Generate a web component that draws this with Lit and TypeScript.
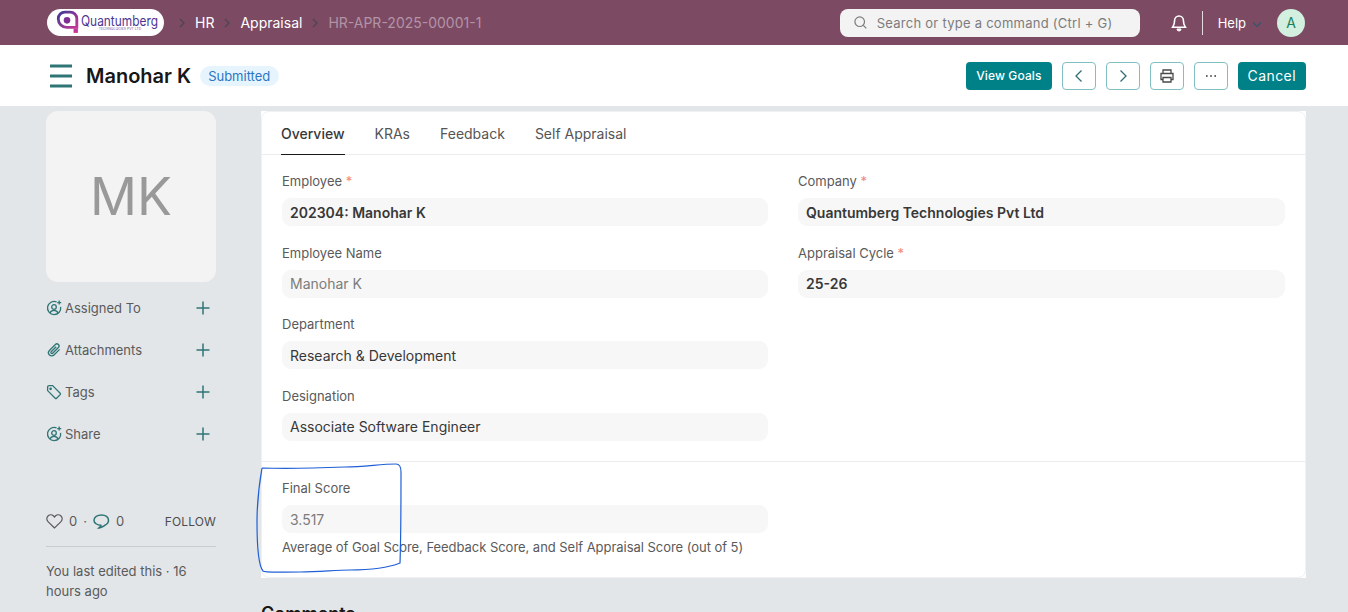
import { LitElement, html, css, svg } from "lit";
import { customElement } from "lit/decorators.js";

interface Field {
  label: string;
  value: string;
  required?: boolean;
  bold?: boolean;
  muted?: boolean;
}

const LEFT_FIELDS: Field[] = [
  { label: "Employee", value: "202304: Manohar K", required: true, bold: true },
  { label: "Employee Name", value: "Manohar K", muted: true },
  { label: "Department", value: "Research & Development" },
  { label: "Designation", value: "Associate Software Engineer" },
];

const RIGHT_FIELDS: Field[] = [
  { label: "Company", value: "Quantumberg Technologies Pvt Ltd", required: true, bold: true },
  { label: "Appraisal Cycle", value: "25-26", required: true, bold: true },
];

const TABS = ["Overview", "KRAs", "Feedback", "Self Appraisal"];

const userIcon = svg`<path d="M10.6 1.9A6.600 6.600 0 1 0 14.600 6.800"/><circle cx="8" cy="7" r="2.3"/><path d="M3.800 13.200c.8-1.900 2.300-2.900 4.200-2.900s3.400 1 4.200 2.900"/><path d="M13.200.6v4M11.200 2.600h4"/>`;
const clipIcon = svg`<path d="M13.600 7.400 8 13a3.200 3.200 0 0 1-4.600-4.500l6-6a2.100 2.100 0 0 1 3 3L6.700 11.200a1 1 0 0 1-1.500-1.400l5-5"/>`;
const tagIcon = svg`<path d="M1.600 3.200v3.400l7.600 7.600a1 1 0 0 0 1.400 0l3.600-3.600a1 1 0 0 0 0-1.400L6.600 1.600H3.200a1.600 1.600 0 0 0-1.600 1.600Z"/><circle cx="4.600" cy="4.800" r=".7"/>`;

const ATTACHMENTS = [
  { label: "Assigned To", icon: userIcon },
  { label: "Attachments", icon: clipIcon },
  { label: "Tags", icon: tagIcon },
  { label: "Share", icon: userIcon },
];

@customElement("app-root")
export class AppRoot extends LitElement {
  static styles = css`
    :host {
      display: block;
      height: 612px;
      overflow: hidden;
      position: relative;
      background: #e2e6e9;
      color: #383838;
      font-family: Inter, "Noto Sans", sans-serif;
      font-size: 13px;
    }

    * {
      box-sizing: border-box;
    }

    svg {
      display: block;
      flex: none;
      fill: none;
    }

    /* top bar */
    .navbar {
      height: 45px;
      background: #7d4a64;
      padding: 0 43px 0 47px;
      display: flex;
      align-items: center;
    }

    .logo {
      width: 117px;
      height: 27px;
      margin-top: -1px;
      border-radius: 14px;
      background: #fff;
      display: flex;
      align-items: center;
      padding-left: 8px;
      gap: 2px;
    }

    .logo__text {
      display: flex;
      flex-direction: column;
      align-items: center;
      color: #4b3592;
    }

    .logo__name {
      font-size: 14px;
      line-height: 13px;
      transform: scaleX(0.85);
      transform-origin: left;
      width: 78px;
      white-space: nowrap;
    }

    .logo__sub {
      font-size: 3.5px;
      line-height: 4px;
      white-space: nowrap;
      color: #7a5aa6;
    }

    .crumbs {
      display: flex;
      align-items: center;
      margin-left: 15px;
      font-size: 14px;
      color: #fff;
      white-space: nowrap;
    }

    .crumbs svg {
      stroke: #4c4550;
      stroke-width: 1.2;
    }

    .crumbs span {
      margin: 0 10px;
    }

    .crumbs .current {
      color: #b194a6;
      margin-right: 0;
    }

    .nav-right {
      margin-left: auto;
      display: flex;
      align-items: center;
    }

    .search {
      width: 300px;
      height: 28px;
      margin-right: 31px;
      border-radius: 8px;
      background: #f3f3f3;
      color: #7c7c7c;
      font-size: 13px;
      letter-spacing: 0.02em;
      display: flex;
      align-items: center;
      gap: 10px;
      padding-left: 14px;
    }

    .search svg {
      stroke: #7c7c7c;
      stroke-width: 1.2;
    }

    .bell {
      fill: #f4f0f2;
      stroke: #fff;
    }

    .divider {
      width: 1px;
      height: 24px;
      background: #e6dae0;
      margin: 0 15px;
    }

    .help {
      color: #fff;
      display: flex;
      align-items: center;
      gap: 5px;
    }

    .help svg {
      stroke: #34566a;
      stroke-width: 1.2;
      margin-top: 3px;
    }

    .avatar {
      width: 28px;
      height: 28px;
      margin-left: 14px;
      border-radius: 50%;
      background: #d2efdf;
      color: #1b7f5a;
      font-size: 14px;
      display: grid;
      place-items: center;
    }

    /* page head */
    .head {
      height: 61px;
      background: #fff;
      padding: 0 42px 0 50px;
      display: flex;
      align-items: center;
    }

    .menu {
      stroke: #2f7575;
      stroke-width: 3;
    }

    .title {
      margin-left: 13px;
      font-size: 20px;
      font-weight: 600;
      color: #171717;
    }

    .badge {
      margin-left: 9px;
      height: 20px;
      padding: 0 9px 0 8px;
      border-radius: 10px;
      background: #e6f4fd;
      color: #2a76c4;
      font-size: 13px;
      display: flex;
      align-items: center;
    }

    .actions {
      margin-left: auto;
      display: flex;
      align-items: center;
      gap: 10px;
    }

    .btn {
      height: 28px;
      border-radius: 4px;
      display: grid;
      place-items: center;
    }

    .btn--primary {
      background: #008087;
      color: #fff;
      padding: 0 10px;
      font-size: 12px;
      font-weight: 500;
      letter-spacing: 0.01em;
    }

    .btn--wide {
      font-size: 14px;
      font-weight: 400;
      letter-spacing: 0.03em;
    }

    .btn--icon {
      width: 34px;
      background: #fff;
      border: 1px solid #80bfc3;
      stroke: #2f6f75;
      stroke-width: 1.3;
    }

    .btn--print {
      stroke: #4a4a4a;
    }

    /* body */
    .layout {
      display: grid;
      grid-template-columns: 170px 1045px;
      column-gap: 45px;
      padding: 5px 0 0 46px;
    }

    .profile {
      width: 170px;
      height: 171px;
      border-radius: 12px;
      background: #f3f3f3;
      color: #999;
      font-size: 52px;
      display: grid;
      place-items: center;
    }

    .links {
      margin-top: 15px;
      display: grid;
      row-gap: 21px;
    }

    .link {
      height: 21px;
      display: flex;
      align-items: center;
      color: #5a5a5a;
    }

    .link__icon {
      stroke: #2f7575;
      stroke-width: 1.3;
      margin-right: 3px;
    }

    .link__plus {
      margin-left: auto;
      margin-right: 6px;
      stroke: #2f7575;
      stroke-width: 1.5;
    }

    .stats {
      margin-top: 69px;
      display: flex;
      align-items: center;
      color: #5a5a5a;
    }

    .stats .heart {
      stroke: #5a5a5a;
      stroke-width: 1.2;
      margin-right: 6px;
    }

    .stats .comment {
      stroke: #2f7575;
      stroke-width: 1.5;
      margin: 0 6px;
    }

    .dot {
      margin-left: 6px;
    }

    .follow {
      margin-left: auto;
      font-size: 12px;
      color: #4c4c4c;
      letter-spacing: 0.01em;
    }

    .edited {
      margin-top: 17px;
      padding-top: 14px;
      border-top: 1px solid #c9cdd1;
      line-height: 20px;
      color: #5a5a5a;
    }

    /* form card */
    .card {
      position: relative;
      background: #fff;
      height: 467px;
    }

    .card::before {
      content: "";
      position: absolute;
      inset: 0;
      border: 1px solid #f0f1f2;
      border-radius: 8px;
      pointer-events: none;
    }

    .tabs {
      height: 44px;
      padding: 0 20px;
      display: flex;
      gap: 30px;
      border-bottom: 1px solid #ebeced;
    }

    .tab {
      height: 44px;
      padding-top: 14px;
      font-size: 14px;
      color: #555;
    }

    .tab--active {
      color: #383838;
      font-weight: 500;
      border-bottom: 1px solid #171717;
    }

    .section {
      padding: 18px 21px 0;
      height: 307px;
      display: grid;
      grid-template-columns: 486px 487px;
      column-gap: 30px;
      align-content: start;
      border-bottom: 1px solid #ebeced;
    }

    .column {
      display: grid;
      row-gap: 18.5px;
      align-content: start;
    }

    .field__label {
      height: 25px;
      line-height: 16px;
      color: #5a5a5a;
    }

    .req {
      color: #f0887c;
    }

    .field__control {
      height: 28px;
      padding: 0 8px;
      border-radius: 9px;
      background: #f7f7f7;
      font-size: 14px;
      color: #383838;
      display: flex;
      align-items: center;
    }

    .is-bold {
      font-weight: 600;
    }

    .is-muted {
      color: #7c7c7c;
    }

    .section--score {
      height: auto;
      border-bottom: 0;
    }

    .hint {
      grid-column: 1 / -1;
      margin-top: 6px;
      font-size: 13px;
      line-height: 16px;
      color: #5a5a5a;
      letter-spacing: -0.04px;
    }

    .comments {
      margin-top: 25px;
      font-size: 18px;
      font-weight: 600;
      color: #171717;
    }

    /* hand-drawn markup on top of the screenshot */
    .scribble {
      position: absolute;
      left: 250px;
      top: 455px;
      stroke: #1f5fd6;
      stroke-width: 1.2;
      pointer-events: none;
    }
  `;

  private crumbChevron() {
    return html`<svg width="6" height="10" viewBox="0 0 6 10"><path d="m1 1 4 4-4 4"></path></svg>`;
  }

  private chevron(right = true) {
    return html`<svg width="16" height="16" viewBox="0 0 16 16">
      <path d=${right ? "m5.500 2.500 5.500 5.500-5.500 5.500" : "M10.500 2.500 5 8l5.500 5.500"}></path>
    </svg>`;
  }

  private renderField(field: Field) {
    const classes = `field__control ${field.bold ? "is-bold" : ""} ${field.muted ? "is-muted" : ""}`;
    return html`<div>
      <div class="field__label">
        ${field.label}${field.required ? html` <span class="req">*</span>` : ""}
      </div>
      <div class=${classes}>${field.value}</div>
    </div>`;
  }

  private renderLogo() {
    return html`<div class="logo">
      <svg width="24" height="24" viewBox="0 0 22 22">
        <defs>
          <linearGradient id="logo-grad" x1="0" y1="0" x2="1" y2="1">
            <stop offset="0" stop-color="#3f3a96"></stop>
            <stop offset="1" stop-color="#c8359a"></stop>
          </linearGradient>
        </defs>
        <path
          d="M9 2h5a6 6 0 0 1 6 6v8h-9a8 8 0 0 1-8-8 6 6 0 0 1 6-6Z"
          stroke="url(#logo-grad)"
          stroke-width="2.6"
        ></path>
        <circle cx="11" cy="9.500" r="3" fill="#7f2f93"></circle>
        <rect x="17" y="17" width="4" height="4" fill="#c8359a"></rect>
      </svg>
      <div class="logo__text">
        <span class="logo__name">Quantumberg</span>
        <span class="logo__sub">TECHNOLOGIES PVT LTD</span>
      </div>
    </div>`;
  }

  render() {
    return html`
      <header class="navbar">
        ${this.renderLogo()}
        <nav class="crumbs">
          ${this.crumbChevron()}<span>HR</span>${this.crumbChevron()}<span>Appraisal</span>${this.crumbChevron()}
          <span class="current">HR-APR-2025-00001-1</span>
        </nav>
        <div class="nav-right">
          <div class="search">
            <svg width="13" height="13" viewBox="0 0 13 13">
              <circle cx="5.700" cy="5.700" r="4.800"></circle>
              <path d="m9.300 9.300 3 3"></path>
            </svg>
            Search or type a command (Ctrl + G)
          </div>
          <svg class="bell" width="16" height="18" viewBox="0 0 16 18">
            <path
              d="M8 2a4.400 4.400 0 0 0-4.400 4.400c0 3.800-1.300 5.600-2 6.800h12.800c-.7-1.200-2-3-2-6.800A4.400 4.400 0 0 0 8 2Z"
              fill="#7d4a64"
              stroke-width="1.600"
            ></path>
            <path d="M6 15h4a2 2 0 0 1-4 0Z"></path>
          </svg>
          <div class="divider"></div>
          <div class="help">
            Help
            <svg width="12" height="12" viewBox="0 0 12 12"><path d="m2 4.500 4 4 4-4"></path></svg>
          </div>
          <div class="avatar">A</div>
        </div>
      </header>

      <section class="head">
        <svg class="menu" width="23" height="24" viewBox="0 0 23 24">
          <path d="M0 2h22M0 12h22M0 22h22"></path>
        </svg>
        <div class="title">Manohar K</div>
        <div class="badge">Submitted</div>
        <div class="actions">
          <div class="btn btn--primary">View Goals</div>
          <div class="btn btn--icon">${this.chevron(false)}</div>
          <div class="btn btn--icon">${this.chevron()}</div>
          <div class="btn btn--icon btn--print">
            <svg width="16" height="16" viewBox="0 0 16 16">
              <path d="M4 5V2h8v3M4 11.500H2V5.500h12v6h-2"></path>
              <path d="M4 9.500h8V14H4Z"></path>
            </svg>
          </div>
          <div class="btn btn--icon">
            <svg width="16" height="16" viewBox="0 0 16 16">
              <path d="M3 8h1.600M7.200 8h1.600M11.400 8h1.600" stroke="#333" stroke-width="1.600"></path>
            </svg>
          </div>
          <div class="btn btn--primary btn--wide">Cancel</div>
        </div>
      </section>

      <main class="layout">
        <aside>
          <div class="profile">MK</div>
          <div class="links">
            ${ATTACHMENTS.map(
              (item) => html`<div class="link">
                <svg class="link__icon" width="16" height="16" viewBox="0 0 16 16">${item.icon}</svg>
                ${item.label}
                <svg class="link__plus" width="14" height="14" viewBox="0 0 14 14">
                  <path d="M7 .5v13M.5 7h13"></path>
                </svg>
              </div>`,
            )}
          </div>
          <div class="stats">
            <svg class="heart" width="17" height="15" viewBox="0 0 17 15">
              <path
                d="M8.500 14 2 7.600A3.900 3.900 0 0 1 2 2a4 4 0 0 1 5.600 0l.9 1 .9-1A4 4 0 0 1 15 2a3.900 3.900 0 0 1 0 5.600Z"
              ></path>
            </svg>
            0<span class="dot">·</span>
            <svg class="comment" width="17" height="15" viewBox="0 0 17 15">
              <path
                d="M8.500 1C4.400 1 1 3.200 1 6.200c0 2.800 3 5 7 5 .2 0-1.600 2.400-2 2.700 1 0 4.600-1.400 6-2.800 2.300-1 3.500-2.900 3.500-4.900C15.500 3.200 12.600 1 8.500 1Z"
              ></path>
            </svg>
            0
            <span class="follow">FOLLOW</span>
          </div>
          <div class="edited">You last edited this · 16 hours ago</div>
        </aside>

        <div>
          <div class="card">
            <div class="tabs">
              ${TABS.map(
                (tab, i) => html`<div class="tab ${i === 0 ? "tab--active" : ""}">${tab}</div>`,
              )}
            </div>
            <div class="section">
              <div class="column">${LEFT_FIELDS.map((f) => this.renderField(f))}</div>
              <div class="column">${RIGHT_FIELDS.map((f) => this.renderField(f))}</div>
            </div>
            <div class="section section--score">
              <div class="column">
                ${this.renderField({ label: "Final Score", value: "3.517", muted: true })}
              </div>
              <div class="hint">Average of Goal Score, Feedback Score, and Self Appraisal Score (out of 5)</div>
            </div>
          </div>
          <div class="comments">Comments</div>
        </div>
      </main>

      <svg class="scribble" width="160" height="125" viewBox="0 0 160 125">
        <path
          d="M12 13C9 30 7 50 7 67c0 23 1 43 6 49 2 2 17 1 37 1 20 0 35-2 50-2 25 0 40-3 50-7 1-28 1-58 1-91 0-5-1-8-5-8-16 0-31 3-51 3-25 1-55 2-83 1"
        ></path>
      </svg>
    `;
  }
}
